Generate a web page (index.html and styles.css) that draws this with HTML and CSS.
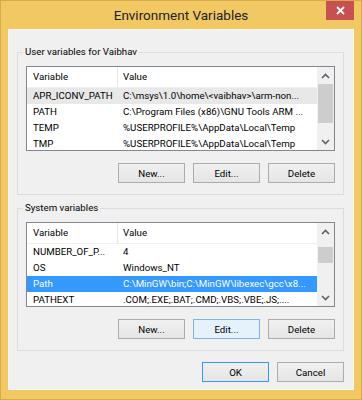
FILE: index.html
```html
<!DOCTYPE html>
<html lang="en">
<head>
    <meta charset="UTF-8">
    <meta name="viewport" content="width=device-width, initial-scale=1.0">
    <title>Environment Variables</title>
    <link rel="stylesheet" href="styles.css">
</head>
<body>

<div class="window">
    <div class="titlebar">
        <span></span>
        <div class="title">Environment Variables</div>
        <button class="close" type="button" aria-label="Close">
            <svg width="9" height="9" viewBox="0 0 9 9"><path d="M1 1 L8 8 M8 1 L1 8" stroke="#fff" stroke-width="1.8" fill="none"/></svg>
        </button>
    </div>

    <div class="client">
        <fieldset class="group">
            <legend>User variables for Vaibhav</legend>
            <div class="list">
                <div class="list-main">
                    <div class="list-head">
                        <div class="col-var">Variable</div>
                        <div class="col-val">Value</div>
                    </div>
                    <div class="row inactive">
                        <div class="col-var">APR_ICONV_PATH</div>
                        <div class="col-val">C:\msys\1.0\home\&lt;vaibhav&gt;\arm-non...</div>
                    </div>
                    <div class="row">
                        <div class="col-var">PATH</div>
                        <div class="col-val">C:\Program Files (x86)\GNU Tools ARM ...</div>
                    </div>
                    <div class="row">
                        <div class="col-var">TEMP</div>
                        <div class="col-val">%USERPROFILE%\AppData\Local\Temp</div>
                    </div>
                    <div class="row">
                        <div class="col-var">TMP</div>
                        <div class="col-val">%USERPROFILE%\AppData\Local\Temp</div>
                    </div>
                </div>
                <div class="scrollbar">
                    <div class="sb-btn">
                        <svg width="9" height="6" viewBox="0 0 9 6"><polyline points="1,5 4.5,1.5 8,5" stroke="#606060" stroke-width="1.6" fill="none"/></svg>
                    </div>
                    <div class="sb-track">
                        <div class="sb-thumb" style="margin-top: 0px; height: 39px;"></div>
                    </div>
                    <div class="sb-btn">
                        <svg width="9" height="6" viewBox="0 0 9 6"><polyline points="1,1 4.5,4.5 8,1" stroke="#606060" stroke-width="1.6" fill="none"/></svg>
                    </div>
                </div>
            </div>
            <div class="buttons">
                <button type="button" class="btn">New...</button>
                <button type="button" class="btn">Edit...</button>
                <button type="button" class="btn">Delete</button>
            </div>
        </fieldset>

        <fieldset class="group group-sys">
            <legend>System variables</legend>
            <div class="list">
                <div class="list-main">
                    <div class="list-head">
                        <div class="col-var">Variable</div>
                        <div class="col-val">Value</div>
                    </div>
                    <div class="row">
                        <div class="col-var">NUMBER_OF_P...</div>
                        <div class="col-val">4</div>
                    </div>
                    <div class="row">
                        <div class="col-var">OS</div>
                        <div class="col-val">Windows_NT</div>
                    </div>
                    <div class="row selected">
                        <div class="col-var">Path</div>
                        <div class="col-val">C:\MinGW\bin;C:\MinGW\libexec\gcc\x8...</div>
                    </div>
                    <div class="row">
                        <div class="col-var">PATHEXT</div>
                        <div class="col-val">.COM;.EXE;.BAT;.CMD;.VBS;.VBE;.JS;....</div>
                    </div>
                </div>
                <div class="scrollbar">
                    <div class="sb-btn">
                        <svg width="9" height="6" viewBox="0 0 9 6"><polyline points="1,5 4.5,1.5 8,5" stroke="#606060" stroke-width="1.6" fill="none"/></svg>
                    </div>
                    <div class="sb-track">
                        <div class="sb-thumb" style="margin-top: 7px; height: 16px;"></div>
                    </div>
                    <div class="sb-btn">
                        <svg width="9" height="6" viewBox="0 0 9 6"><polyline points="1,1 4.5,4.5 8,1" stroke="#606060" stroke-width="1.6" fill="none"/></svg>
                    </div>
                </div>
            </div>
            <div class="buttons">
                <button type="button" class="btn">New...</button>
                <button type="button" class="btn hot">Edit...</button>
                <button type="button" class="btn">Delete</button>
            </div>
        </fieldset>

        <div class="buttons dialog-buttons">
            <button type="button" class="btn default">OK</button>
            <button type="button" class="btn">Cancel</button>
        </div>
    </div>
</div>

</body>
</html>
```

FILE: styles.css
```css
body {
    margin: 0;
    font-family: Roboto, "Noto Sans", sans-serif;
    font-size: 9.7px;
    color: #000;
}
.window {
    width: 362px;
    height: 400px;
    box-sizing: border-box;
    background-color: #f1c862;
    border: 1px solid #d6ab4c;
    padding: 0 7px 9px;
    display: flex;
    flex-direction: column;
}
.titlebar {
    height: 28px;
    display: grid;
    grid-template-columns: 1fr auto 1fr;
    align-items: start;
}
.title {
    font-size: 13.5px;
    line-height: 28px;
    color: #222;
}
.close {
    justify-self: end;
    width: 28px;
    height: 19px;
    border: none;
    padding: 0;
    background-color: #c75050;
    display: flex;
    align-items: center;
    justify-content: center;
}
.client {
    flex: 1;
    background-color: #f0f0f0;
    border: 1px solid #f8f8f8;
    padding: 14px 9px 7px 8px;
    display: flex;
    flex-direction: column;
}
.group {
    margin: 0;
    padding: 6px 8px 11px 8px;
    border: 1px solid #dcdcdc;
    min-width: 0;
}
.group-sys {
    margin-top: 5px;
}
.group legend {
    padding: 0 2px;
    margin-left: -3px;
    line-height: 16px;
}
.list {
    height: 85px;
    box-sizing: border-box;
    border: 1px solid #828790;
    background-color: #fff;
    display: flex;
}
.list-main {
    flex: 1;
    min-width: 0;
    overflow: hidden;
}
.list-head, .row {
    display: flex;
    white-space: nowrap;
}
.list-head {
    height: 21px;
    line-height: 20px;
    box-sizing: border-box;
    border-bottom: 1px solid #f0f0f0;
}
.list-head .col-var {
    border-right: 1px solid #e5e5e5;
}
.row {
    height: 16px;
    line-height: 16px;
}
.col-var {
    width: 91px;
    padding-left: 6px;
    box-sizing: border-box;
    overflow: hidden;
}
.col-val {
    flex: 1;
    padding-left: 5px;
    overflow: hidden;
}
.row.inactive {
    background-color: #e8e8e8;
}
.row.selected {
    background-color: #3399ff;
    color: #fff;
}
.scrollbar {
    width: 17px;
    background-color: #f0f0f0;
    display: flex;
    flex-direction: column;
}
.sb-btn {
    height: 17px;
    display: flex;
    align-items: center;
    justify-content: center;
}
.sb-track {
    flex: 1;
}
.sb-thumb {
    margin: 0 1px;
    background-color: #cdcdcd;
}
.buttons {
    display: flex;
    justify-content: flex-end;
    gap: 8px;
    margin-top: 12px;
}
.btn {
    width: 67px;
    height: 20px;
    box-sizing: border-box;
    padding: 0;
    border: 1px solid #acacac;
    background: linear-gradient(#f0f0f0, #e5e5e5);
    font-family: inherit;
    font-size: inherit;
    color: #000;
}
.btn.hot {
    background: #e5f1fb;
    border-color: #7eb4ea;
}
.btn.default {
    border-color: #3399ff;
}
.dialog-buttons {
    margin-top: 11px;
}
```
